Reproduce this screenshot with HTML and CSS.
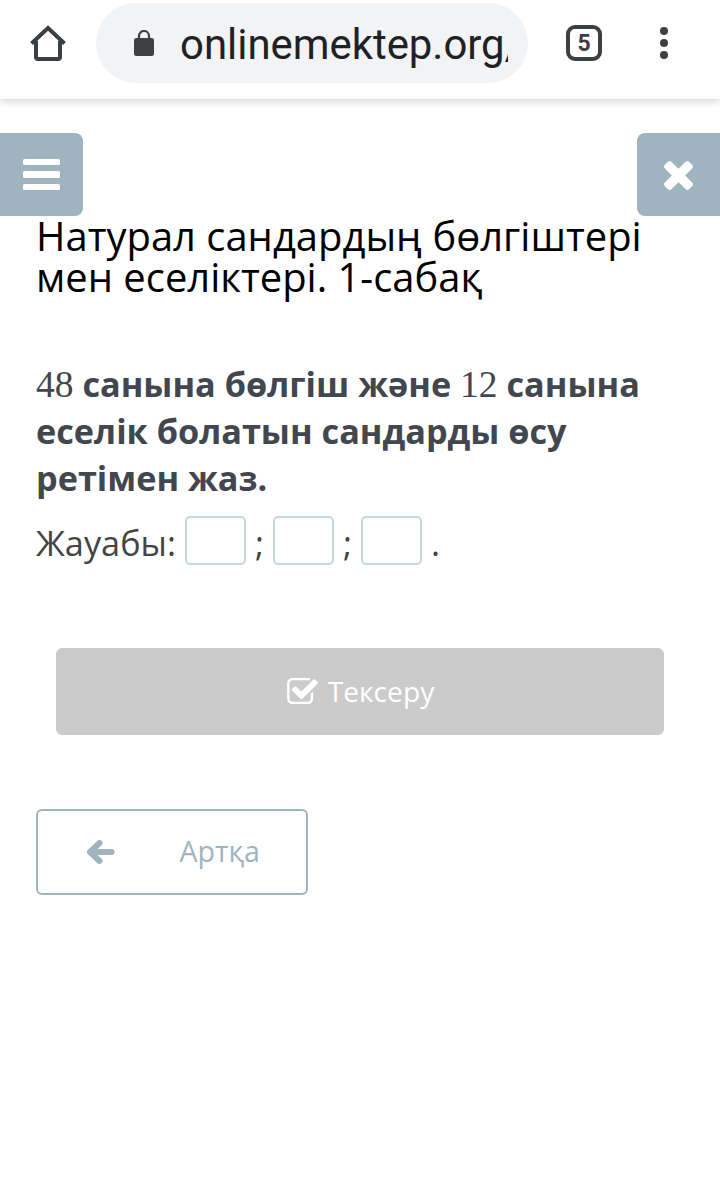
FILE: index.html
```html
<!DOCTYPE html>
<html lang="kk">
    <head>
        <meta charset="utf-8">
        <meta name="viewport" content="width=device-width, initial-scale=1.0">
        <title>Натурал сандардың бөлгіштері мен еселіктері</title>
        <link rel="stylesheet" href="styles.css">
    </head>
    <body>
        <header class="browser-bar">
            <svg class="home" viewBox="0 0 38 38" width="38" height="38">
                <path d="M2.500 19.500 19 4l16.500 15.500M7 17v16q0 2 2 2h20q2 0 2-2V17" fill="none" stroke="#3c4043" stroke-width="4"/>
            </svg>
            <div class="address">
                <svg class="lock" viewBox="0 0 20 26" width="20" height="26">
                    <rect y="8" width="20" height="18" rx="2.500" fill="#3c4043"/>
                    <path d="M5 9V6a5 5 0 0 1 10 0v3" fill="none" stroke="#3c4043" stroke-width="2.200"/>
                </svg>
                <span class="url">onlinemektep.org/</span>
            </div>
            <div class="tabs">5</div>
            <div class="dots"><i></i><i></i><i></i></div>
        </header>
        <nav class="controls">
            <button class="control menu" aria-label="menu"><i></i><i></i><i></i></button>
            <button class="control close" aria-label="close">
                <svg viewBox="302 366 1188 1188" width="29" height="29">
                    <path fill="#fff" d="M1490 1322q0 40-28 68l-136 136q-28 28-68 28t-68-28l-294-294-294 294q-28 28-68 28t-68-28l-136-136q-28-28-28-68t28-68l294-294-294-294q-28-28-28-68t28-68l136-136q28-28 68-28t68 28l294 294 294-294q28-28 68-28t68 28l136 136q28 28 28 68t-28 68l-294 294 294 294q28 28 28 68z"/>
                </svg>
            </button>
        </nav>
        <main>
            <h1>Натурал сандардың бөлгіштері<br>мен еселіктері. 1-сабақ</h1>
            <p class="question"><span class="math">48</span> санына бөлгіш және <span class="math">12</span> санына<br>еселік болатын сандарды өсу<br>ретімен жаз.</p>
            <div class="answer">
                <span class="label">Жауабы:</span>
                <input type="text" class="blank"><span class="mark">;</span>
                <input type="text" class="blank"><span class="mark">;</span>
                <input type="text" class="blank"><span class="mark">.</span>
            </div>
            <button class="check">
                <svg viewBox="64 128 1664 1408" width="31" height="26">
                    <path fill="#fff" d="M1472 930v318q0 119-84.500 203.500t-203.500 84.500h-832q-119 0-203.500-84.500t-84.500-203.500v-832q0-119 84.500-203.500t203.500-84.500h832q63 0 117 25 15 7 18 23 3 17-9 29l-49 49q-10 10-23 10-3 0-9-2-23-6-45-6h-832q-66 0-113 47t-47 113v832q0 66 47 113t113 47h832q66 0 113-47t47-113v-254q0-13 9-22l64-64q10-10 23-10 6 0 12 3 20 8 20 29zm231-489l-814 814q-24 24-57 24t-57-24l-430-430q-24-24-24-57t24-57l110-110q24-24 57-24t57 24l263 263 647-647q24-24 57-24t57 24l110 110q24 24 24 57t-24 57z"/>
                </svg>
                <span>Тексеру</span>
            </button>
            <button class="back">
                <svg viewBox="0 0 29 24" width="29" height="24">
                    <path d="M13.500 3 4 12l9.500 9M5 12h20.500" fill="none" stroke="#a0b4c0" stroke-width="6" stroke-linecap="round" stroke-linejoin="round"/>
                </svg>
                <span>Артқа</span>
            </button>
        </main>
    </body>
</html>
```
FILE: styles.css
```css
:root{
    --accent: #a0b4c0;
    --icon: #3c4043;
    --text: #41464f;
}
*{
    margin: 0;
    padding: 0;
    box-sizing: border-box;
}
body{
    min-height: 1195px;
    background-color: #fff;
    font-family: "Open Sans", "Noto Sans", sans-serif;
}
button{
    border: none;
    font-family: inherit;
}
/* browser toolbar */
.browser-bar{
    height: 99px;
    padding: 3px 52px 0 29px;
    display: flex;
    align-items: flex-start;
    box-shadow: 0 1px 10px rgba(0,0,0,.22);
}
.home{
    margin-top: 21px;
}
.address{
    width: 432px;
    height: 80px;
    margin-left: 29px;
    padding-left: 38px;
    border-radius: 40px;
    background-color: #f1f3f4;
    display: flex;
    align-items: center;
}
.lock{
    flex: none;
    margin-right: 26px;
}
.url{
    width: 328px;
    overflow: hidden;
    font: 41.900px/56px Roboto, sans-serif;
    color: #202124;
    white-space: nowrap;
    padding-top: 4px;
}
.tabs{
    width: 36px;
    height: 36px;
    margin: 22px 0 0 38px;
    border: 4px solid var(--icon);
    border-radius: 9px;
    font: bold 23px/29px Roboto, sans-serif;
    color: var(--icon);
    text-align: center;
}
.dots{
    margin: 24px 0 0 auto;
    display: flex;
    flex-direction: column;
    gap: 4px;
}
.dots i{
    width: 8px;
    height: 8px;
    border-radius: 50%;
    background-color: var(--icon);
}
/* menu and close */
.controls{
    margin-top: 34px;
    display: flex;
    justify-content: space-between;
}
.control{
    width: 83px;
    height: 83px;
    background-color: var(--accent);
    display: flex;
    align-items: center;
    justify-content: center;
}
.menu{
    border-radius: 0 8px 8px 0;
    flex-direction: column;
    gap: 6px;
}
.menu i{
    width: 37px;
    height: 6.500px;
    border-radius: 1.500px;
    background-color: #fff;
}
.close{
    border-radius: 8px 0 0 8px;
    padding-top: 2px;
}
/* lesson */
main{
    margin-top: -1px;
    padding: 0 36px;
}
h1{
    font-size: 39.950px;
    font-weight: 400;
    line-height: 41px;
    color: #000;
    white-space: nowrap;
}
.question{
    margin-top: 63px;
    font-size: 34.240px;
    font-weight: 700;
    line-height: 47px;
    color: var(--text);
    white-space: nowrap;
}
.math{
    font-family: "Liberation Serif", serif;
    font-size: 37.500px;
    font-weight: 400;
    line-height: 1;
}
.answer{
    height: 49px;
    margin-top: 15px;
    display: flex;
    align-items: center;
    font-size: 34.300px;
    color: #444;
}
.label{
    width: 149px;
    padding-top: 3px;
    white-space: nowrap;
}
.mark{
    width: 27px;
    padding: 3px 0 0 9px;
}
.blank{
    width: 61px;
    height: 49px;
    border: 2px solid #c5d9db;
    border-radius: 5px;
    background-color: #fff;
}
.check{
    width: 608px;
    height: 87px;
    margin: 83px 20px 0;
    padding: 0 0 2px 1px;
    border-radius: 6px;
    background-color: #cbcbcb;
    color: #fff;
    font-size: 28.200px;
    display: flex;
    align-items: center;
    justify-content: center;
    gap: 10px;
}
.back{
    width: 272px;
    height: 86px;
    margin-top: 74px;
    padding: 0 46px 0 48px;
    border: 2px solid var(--accent);
    border-radius: 6px;
    background-color: #fff;
    color: var(--accent);
    font-size: 28.600px;
    display: flex;
    align-items: center;
    justify-content: space-between;
}
.back span{
    padding-bottom: 3px;
}
```
